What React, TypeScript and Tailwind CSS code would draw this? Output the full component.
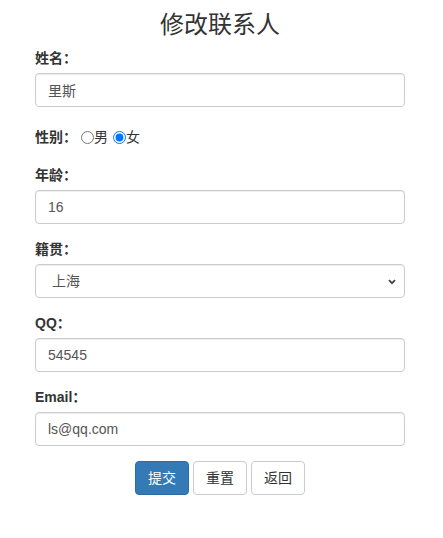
import React, { useState } from "react";

const FONT = {
  fontFamily:
    '"Liberation Sans", Arial, "Noto Sans CJK SC", sans-serif',
};

const inputCls =
  "block h-[34px] w-full rounded-[4px] border border-[#ccc] bg-white px-[12px] py-[6px] text-[14px] leading-[20px] text-[#555] shadow-[inset_0_1px_1px_rgba(0,0,0,0.075)] outline-none";

const labelCls = "mb-[5px] block text-[14px] font-bold leading-[20px] text-[#333]";

function Field({
  label,
  value,
  onChange,
}: {
  label: string;
  value: string;
  onChange: (v: string) => void;
}) {
  return (
    <div className="mb-[15px]">
      <label className={labelCls}>{label}</label>
      <input
        className={inputCls}
        value={value}
        onChange={(e) => onChange(e.target.value)}
      />
    </div>
  );
}

export default function App() {
  const [name, setName] = useState("里斯");
  const [gender, setGender] = useState("女");
  const [age, setAge] = useState("16");
  const [place, setPlace] = useState("上海");
  const [qq, setQq] = useState("54545");
  const [email, setEmail] = useState("ls@qq.com");

  return (
    <div className="min-h-[538px] bg-white text-[14px] text-[#333]" style={FONT}>
      <div className="w-[370px]" style={{ marginLeft: 35 }}>
        <h3 className="pt-[12px] pb-[10px] text-center text-[24px] font-normal leading-[26px] text-[#333]">
          修改联系人
        </h3>

        <form onSubmit={(e) => e.preventDefault()}>
          <Field label="姓名：" value={name} onChange={setName} />

          <div className="mb-[15px] flex h-[28px] items-center pt-[2px]">
            <label className="text-[14px] font-bold leading-[20px] text-[#333]">
              性别：
            </label>
            <label className="ml-[4px] flex items-center leading-[20px]">
              <input
                type="radio"
                name="gender"
                className="m-0 h-[13px] w-[13px]"
                checked={gender === "男"}
                onChange={() => setGender("男")}
              />
              <span>男</span>
            </label>
            <label className="ml-[5px] flex items-center leading-[20px]">
              <input
                type="radio"
                name="gender"
                className="m-0 h-[13px] w-[13px]"
                checked={gender === "女"}
                onChange={() => setGender("女")}
              />
              <span>女</span>
            </label>
          </div>

          <Field label="年龄：" value={age} onChange={setAge} />

          <div className="mb-[15px]">
            <label className={labelCls}>籍贯：</label>
            <div className="relative">
              <select
                className={inputCls + " appearance-none pl-[16px]"}
                value={place}
                onChange={(e) => setPlace(e.target.value)}
              >
                <option>北京</option>
                <option>上海</option>
                <option>广州</option>
              </select>
              <svg
                className="pointer-events-none absolute right-[9px] top-[15px]"
                width="8"
                height="6"
                viewBox="0 0 8 6"
              >
                <path
                  d="M1 1.2 L4 4.2 L7 1.2"
                  fill="none"
                  stroke="#444"
                  strokeWidth="1.8"
                />
              </svg>
            </div>
          </div>

          <Field label="QQ：" value={qq} onChange={setQq} />
          <Field label="Email：" value={email} onChange={setEmail} />

          <div className="flex justify-center gap-[4px]">
            <button
              type="submit"
              className="h-[34px] rounded-[4px] border border-[#2e6da4] bg-[#337ab7] px-[12px] text-[14px] leading-[20px] text-white"
            >
              提交
            </button>
            <button
              type="button"
              className="h-[34px] rounded-[4px] border border-[#ccc] bg-white px-[12px] text-[14px] leading-[20px] text-[#333]"
            >
              重置
            </button>
            <button
              type="button"
              className="h-[34px] rounded-[4px] border border-[#ccc] bg-white px-[12px] text-[14px] leading-[20px] text-[#333]"
            >
              返回
            </button>
          </div>
        </form>
      </div>
    </div>
  );
}
